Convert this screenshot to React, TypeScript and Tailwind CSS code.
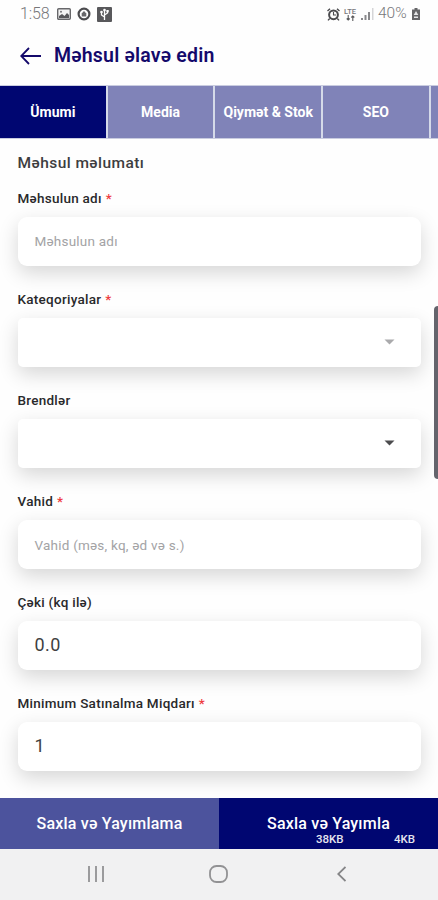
import React from "react";

const tabs = ["Ümumi", "Media", "Qiymət & Stok", "SEO"];

type FieldProps = {
  label: string;
  required?: boolean;
  placeholder?: string;
  value?: string;
  caret?: string;
};

function Field({ label, required, placeholder, value, caret }: FieldProps) {
  return (
    <div className="h-[101.1px] shrink-0">
      <div className="flex h-[28px] items-start text-[13.5px] leading-[19px] font-medium tracking-[0.26px] text-[#29292b]">
        <span>{label}</span>
        {required && <span className="ml-1 text-[#ee3c40]">*</span>}
      </div>
      <div
        className={`flex h-[49px] items-center bg-white pl-[17px] shadow-[0_7px_20px_rgba(0,0,0,0.16)] ${
          caret ? "rounded-[5px]" : "rounded-[9px]"
        }`}
      >
        {placeholder && (
          <span className="text-[13.5px] tracking-[0.22px] text-[#a3a3a5]">{placeholder}</span>
        )}
        {value && <span className="pb-[3px] text-[18px] tracking-[0.4px] text-[#3f3f41]">{value}</span>}
        {caret && (
          <svg className="mr-[26px] mb-[2px] ml-auto" width="11" height="6" viewBox="0 0 11 6">
            <path d="M0.5 0.5H10.5L5.5 5.5Z" fill={caret} />
          </svg>
        )}
      </div>
    </div>
  );
}

function StatusBar() {
  return (
    <div className="flex h-[28px] shrink-0 items-center pl-[20px] text-[#77777a]">
      <span className="w-[37px] text-[16px] font-light tracking-[-0.1px]">1:58</span>
      <svg width="14" height="12" viewBox="0 0 14 12">
        <rect x="0.7" y="0.7" width="12.6" height="10.6" rx="1" fill="#f4f4f4" stroke="#67676a" strokeWidth="1.4" />
        <path d="M2 10V8L5 6L7.5 8L10 5L12 7V10Z" fill="#58585b" />
        <circle cx="4" cy="3.7" r="1" fill="#77777a" />
      </svg>
      <svg className="ml-[6px]" width="14" height="14" viewBox="0 0 14 14">
        <circle cx="7" cy="7" r="5.4" fill="#fff" stroke="#4c4c4f" strokeWidth="2.2" />
        <path d="M4.7 9.5V6.5L7 4L9.3 6.5V9.5Z" fill="#68686b" />
      </svg>
      <svg className="ml-[6px]" width="15" height="15" viewBox="0 0 15 15">
        <rect width="15" height="15" rx="1" fill="#58585b" />
        <path d="M7.5 13V3M7.5 10L4.5 8V5M7.5 8L10.5 6V3.5" fill="none" stroke="#fff" strokeWidth="1.3" />
        <circle cx="7.5" cy="3" r="1.3" fill="#fff" />
        <circle cx="4.5" cy="5" r="1.3" fill="#fff" />
        <rect x="9.4" y="3" width="2.3" height="2.3" fill="#fff" />
      </svg>
      <svg className="ml-auto" width="13" height="13" viewBox="0 0 13 13" fill="none" stroke="#4a4a4d">
        <circle cx="6.5" cy="6.8" r="4.4" strokeWidth="2" />
        <path d="M6.5 4V7H9" strokeWidth="1.1" />
        <path d="M0.5 3L3 0.8M10 0.8L12.5 3M2.7 10.5L1 12.4M10.3 10.5L12 12.4" strokeWidth="1.4" />
      </svg>
      <div className="ml-[3px] flex w-[14px] flex-col items-center">
        <span className="text-[7.5px] leading-[7px] font-medium">LTE</span>
        <svg width="9" height="6" viewBox="0 0 9 6" stroke="#58585b" fill="none">
          <path d="M2.2 0V5M0.7 3.5L2.2 5L3.7 3.5M6.8 6V1M5.3 2.5L6.8 1L8.3 2.5" strokeWidth="1.1" />
        </svg>
      </div>
      <svg className="ml-[4px]" width="13" height="12" viewBox="0 0 13 12">
        <rect x="0" y="10" width="2" height="2" fill="#88888b" />
        <rect x="3.5" y="7" width="2" height="5" fill="#88888b" />
        <rect x="7" y="4" width="2" height="8" fill="#88888b" />
        <rect x="11" y="0" width="1.5" height="12" fill="#d5d5d7" />
      </svg>
      <span className="ml-[4px] w-[34px] text-[15.5px] font-light whitespace-nowrap">40%</span>
      <svg className="mr-[18px]" width="8" height="12" viewBox="0 0 8 12">
        <path d="M2.5 0H5.5V1.5H8V12H0V1.5H2.5Z" fill="#656568" />
        <path d="M4 3L1.7 7H6.3ZM2 8.5H6V10H2Z" fill="#e5e5e7" />
      </svg>
    </div>
  );
}

export default function App() {
  return (
    <div className="relative flex h-[900px] w-[438px] flex-col overflow-hidden bg-[#fefefe] font-[Roboto,sans-serif]">
      <StatusBar />
      <header className="flex h-[57px] shrink-0 items-center pb-[2px] pl-[20px] text-[#14096b]">
        <svg width="21" height="18" viewBox="0 0 21 18" fill="none" stroke="currentColor" strokeWidth="1.8">
          <path d="M21 9H1.5M9 1L1.2 9L9 17" />
        </svg>
        <h1 className="ml-[13px] text-[19.5px] font-semibold tracking-[0.2px] whitespace-nowrap">Məhsul əlavə edin</h1>
      </header>
      <nav className="flex h-[54px] w-[540px] shrink-0 gap-[2px] border-y border-[#c9cce0] bg-[#d5dae9] text-[14px] font-bold text-white">
        {tabs.map((tab, i) => (
          <div
            key={tab}
            className={`flex w-[105.7px] shrink-0 items-center justify-center whitespace-nowrap ${
              i === 0 ? "bg-[#000671]" : "bg-[#8083b8]"
            }`}
          >
            {tab}
          </div>
        ))}
        <div className="w-[106px] bg-[#8083b8]" />
      </nav>
      <main className="flex h-[659px] shrink-0 flex-col overflow-hidden pr-[17px] pl-[17.5px]">
        <h2 className="mt-[13px] mb-[15px] h-[22px] shrink-0 text-[15.5px] leading-[22px] font-medium tracking-[0.45px] text-[#3d3d40]">
          Məhsul məlumatı
        </h2>
        <Field label="Məhsulun adı" required placeholder="Məhsulun adı" />
        <Field label="Kateqoriyalar" required caret="#aaaaac" />
        <Field label="Brendlər" caret="#4c4c4e" />
        <Field label="Vahid" required placeholder="Vahid (məs, kq, əd və s.)" />
        <Field label="Çəki (kq ilə)" value="0.0" />
        <Field label="Minimum Satınalma Miqdarı" required value="1" />
      </main>
      <div className="flex h-[51px] shrink-0 text-[16px] font-medium text-white">
        <button className="w-[219px] bg-[#4c539d] tracking-[0.2px]">Saxla və Yayımlama</button>
        <button className="w-[219px] bg-[#000671] tracking-[0.2px]">Saxla və Yayımla</button>
      </div>
      <div className="grid grow grid-cols-[96px_1fr_97px] items-center bg-[#f1f1f2] pb-[2px]">
        <svg className="ml-[87px]" width="18" height="16" viewBox="0 0 18 16" stroke="#929294" strokeWidth="1.8">
          <path d="M2 0V16M9 0V16M16 0V16" />
        </svg>
        <svg className="ml-[113px]" width="19" height="18" viewBox="0 0 19 18" fill="none" stroke="#929294" strokeWidth="1.8">
          <rect x="1" y="1" width="17" height="16" rx="6.5" />
        </svg>
        <svg className="-ml-[4px]" width="9" height="16" viewBox="0 0 9 16" fill="none" stroke="#858587" strokeWidth="1.8">
          <path d="M8.5 1L1.2 8L8.5 15" />
        </svg>
      </div>
      <span className="absolute top-[833px] left-[316px] text-[11.5px] leading-[13px] font-medium text-[#e4e4ee]">38KB</span>
      <span className="absolute top-[833px] left-[394px] text-[11.5px] leading-[13px] font-medium text-[#e4e4ee]">4KB</span>
      <div className="absolute top-[306px] right-0 h-[173px] w-[4px] rounded-l-[4px] bg-[#64646c]" />
    </div>
  );
}
